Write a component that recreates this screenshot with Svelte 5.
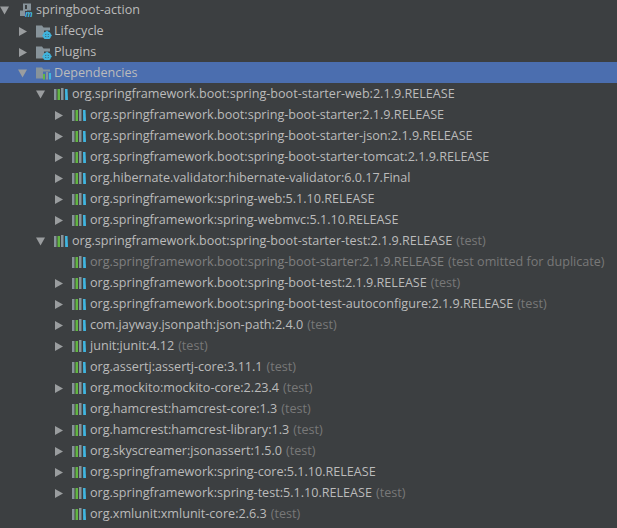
<script>
	const rows = [
		{ d: 0, arrow: 'down', icon: 'module', name: 'springboot-action' },
		{ d: 1, arrow: 'right', icon: 'gear', name: 'Lifecycle' },
		{ d: 1, arrow: 'right', icon: 'gear', name: 'Plugins' },
		{ d: 1, arrow: 'down', icon: 'deps', name: 'Dependencies', selected: true },
		{ d: 2, arrow: 'down', icon: 'lib', name: 'org.springframework.boot:spring-boot-starter-web:2.1.9.RELEASE' },
		{ d: 3, arrow: 'right', icon: 'lib', name: 'org.springframework.boot:spring-boot-starter:2.1.9.RELEASE' },
		{ d: 3, arrow: 'right', icon: 'lib', name: 'org.springframework.boot:spring-boot-starter-json:2.1.9.RELEASE' },
		{ d: 3, arrow: 'right', icon: 'lib', name: 'org.springframework.boot:spring-boot-starter-tomcat:2.1.9.RELEASE' },
		{ d: 3, arrow: 'right', icon: 'lib', name: 'org.hibernate.validator:hibernate-validator:6.0.17.Final' },
		{ d: 3, arrow: 'right', icon: 'lib', name: 'org.springframework:spring-web:5.1.10.RELEASE' },
		{ d: 3, arrow: 'right', icon: 'lib', name: 'org.springframework:spring-webmvc:5.1.10.RELEASE' },
		{ d: 2, arrow: 'down', icon: 'lib', name: 'org.springframework.boot:spring-boot-starter-test:2.1.9.RELEASE', note: '(test)' },
		{ d: 3, icon: 'lib', dim: true, name: 'org.springframework.boot:spring-boot-starter:2.1.9.RELEASE', note: '(test omitted for duplicate)' },
		{ d: 3, arrow: 'right', icon: 'lib', name: 'org.springframework.boot:spring-boot-test:2.1.9.RELEASE', note: '(test)' },
		{ d: 3, arrow: 'right', icon: 'lib', name: 'org.springframework.boot:spring-boot-test-autoconfigure:2.1.9.RELEASE', note: '(test)' },
		{ d: 3, arrow: 'right', icon: 'lib', name: 'com.jayway.jsonpath:json-path:2.4.0', note: '(test)' },
		{ d: 3, arrow: 'right', icon: 'lib', name: 'junit:junit:4.12', note: '(test)' },
		{ d: 3, icon: 'lib', name: 'org.assertj:assertj-core:3.11.1', note: '(test)' },
		{ d: 3, arrow: 'right', icon: 'lib', name: 'org.mockito:mockito-core:2.23.4', note: '(test)' },
		{ d: 3, icon: 'lib', name: 'org.hamcrest:hamcrest-core:1.3', note: '(test)' },
		{ d: 3, arrow: 'right', icon: 'lib', name: 'org.hamcrest:hamcrest-library:1.3', note: '(test)' },
		{ d: 3, arrow: 'right', icon: 'lib', name: 'org.skyscreamer:jsonassert:1.5.0', note: '(test)' },
		{ d: 3, arrow: 'right', icon: 'lib', name: 'org.springframework:spring-core:5.1.10.RELEASE' },
		{ d: 3, arrow: 'right', icon: 'lib', name: 'org.springframework:spring-test:5.1.10.RELEASE', note: '(test)' },
		{ d: 3, icon: 'lib', name: 'org.xmlunit:xmlunit-core:2.6.3', note: '(test)' }
	];
</script>

<main class="tree">
	{#each rows as row}
		<div class="row" class:selected={row.selected} style="padding-left: {row.d * 18}px">
			<span class="arrow">
				{#if row.arrow === 'down'}
					<svg width="12" height="12" viewBox="0 0 12 12"><path d="M0 2.500h9l-4.500 8z" fill="#9a9d9f" /></svg>
				{:else if row.arrow === 'right'}
					<svg width="12" height="12" viewBox="0 0 12 12"><path d="M1 2v9l8-4.500z" fill="#9a9d9f" /></svg>
				{/if}
			</span>
			<svg class="icon" width="16" height="16" viewBox="0 0 16 16">
				{#if row.icon === 'lib'}
					<rect x="0" y="3" width="2.500" height="11" fill="#87939a" />
					<rect x="3.500" y="3" width="2.500" height="11" fill="#62b543" />
					<rect x="7" y="2" width="2.500" height="12" fill="#87939a" />
					<path d="M11 3h2.500l.5 11h-2.800z" fill="#40b6e0" />
				{:else if row.icon === 'module'}
					<path d="M5 1.500h8v7H9v5.500H2V8.500h3z" fill="#87939a" />
					<path d="M7 3h2v4H7z" fill="#3c3f41" />
					<path d="M7 9h9v7H7z" fill="#3c3f41" />
					<text x="7" y="15" class="m">m</text>
				{:else if row.icon === 'gear'}
					<path d="M0 2.500h6l1.500 2H14v3H8v7H0z" fill="#87939a" />
					<circle cx="11" cy="12.500" r="3" fill="none" stroke="#40b6e0" stroke-width="2" />
					<path d="M10.200 7.800h1.600v8.200h-1.600zM6.300 11.700h9.400v1.600H6.300z" fill="#40b6e0" />
				{:else}
					<path d="M0 2.500h6l1.500 2H14v2H7v7H0z" fill="#87939a" />
					<rect x="7" y="9" width="2" height="5.500" fill="#62b543" />
					<rect x="10" y="7" width="2" height="7.500" fill="#87939a" />
					<rect x="13" y="8" width="2" height="6.500" fill="#40b6e0" />
				{/if}
			</svg>
			<span class="name" class:dim={row.dim}>{row.name}</span>
			{#if row.note}<span class="note">{row.note}</span>{/if}
		</div>
	{/each}
</main>

<style>
	:global(body) {
		background: #3c3f41;
	}
	.tree {
		height: 528px;
		overflow: hidden;
		background: #3c3f41;
		margin-top: -1px;
		font-family: "Open Sans", "Noto Sans", sans-serif;
		font-size: 12.6px;
		color: #bbbbbb;
	}
	.row {
		display: flex;
		align-items: center;
		height: 21px;
		white-space: nowrap;
	}
	.selected {
		background: #4b6eaf;
	}
	.arrow {
		display: flex;
		width: 18px;
		height: 12px;
		flex: none;
	}
	.icon {
		flex: none;
		margin-right: 2px;
	}
	.m {
		font: italic bold 8.500px "Open Sans", sans-serif;
		fill: #40b6e0;
	}
	.dim {
		color: #808080;
	}
	.note {
		margin-left: 4px;
		color: #787878;
	}
</style>
